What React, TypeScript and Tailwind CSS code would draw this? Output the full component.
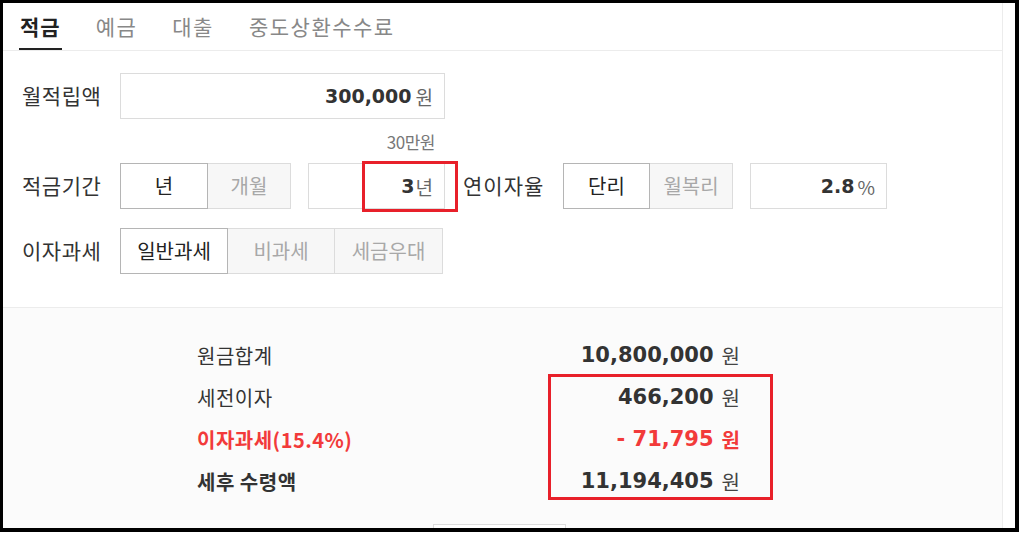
import React from "react";

const KR = { fontFamily: '"Noto Sans CJK KR", "Noto Sans", sans-serif' };
const NUM = { fontFamily: '"DejaVu Sans", "Noto Sans CJK KR", sans-serif' };

function Seg({ items, widths, active }: { items: string[]; widths: number[]; active: number }) {
  return (
    <div className="flex h-[46px]">
      {items.map((t, i) => (
        <div
          key={t}
          style={{ width: widths[i] }}
          className={
            i === active
              ? "flex items-center justify-center border border-[#b5b5b5] bg-white text-[20px] text-[#222]"
              : "flex items-center justify-center border border-l-0 border-[#dcdcdc] bg-[#f7f7f7] text-[20px] text-[#a8a8a8]"
          }
        >
          {t}
        </div>
      ))}
    </div>
  );
}

function Field({ w, value, unit, gap, children }: { w: number; value: string; unit: string; gap: string; children?: React.ReactNode }) {
  return (
    <div
      style={{ width: w }}
      className="relative flex h-[46px] items-center justify-end border border-[#dcdcdc] bg-white pr-[11px]"
    >
      <span style={NUM} className="text-[19px] font-bold text-[#333]">{value}</span>
      <span className={gap + " mt-[3px] text-[19px] text-[#666]"}>{unit}</span>
      {children}
    </div>
  );
}

function ResultRow({ label, value, red, bold }: { label: string; value: string; red?: boolean; bold?: boolean }) {
  return (
    <div className="flex h-[42px] items-center justify-between">
      <span
        className={
          red
            ? "text-[20px] font-bold tracking-[0.5px] text-[#f23a3a]"
            : bold
            ? "text-[20px] font-bold tracking-[0.5px] text-[#333]"
            : "text-[20px] tracking-[0.5px] text-[#333]"
        }
      >
        {label}
      </span>
      <span className="flex items-center">
        <span style={NUM} className={red ? "text-[21px] font-bold text-[#f23a3a]" : "text-[21px] font-bold text-[#333]"}>
          {value}
        </span>
        <span className={red ? "ml-[8px] text-[20px] font-bold text-[#f23a3a]" : "ml-[8px] text-[20px] text-[#444]"}>원</span>
      </span>
    </div>
  );
}

export default function App() {
  return (
    <div style={KR} className="h-[536px] w-[1024px] overflow-hidden bg-white">
      <div className="relative h-[532px] w-[1019px] overflow-hidden border-b-4 border-l-[3px] border-r-4 border-t-[3px] border-black bg-white">
        <div className="h-[560px] w-[1000px] border-r border-[#ececec]">
          {/* tabs */}
          <div className="flex h-[48px] items-end gap-[33px] border-b border-[#ececec] pl-[16px]">
            <div className="border-b-2 border-[#222] px-[1px] pb-[8px] text-[21px] font-bold leading-[28px] tracking-[1px] text-[#222]">적금</div>
            <div className="px-[1px] pb-[10px] text-[21px] leading-[28px] tracking-[1.5px] text-[#888]">예금</div>
            <div className="px-[1px] pb-[10px] text-[21px] leading-[28px] tracking-[1.5px] text-[#888]">대출</div>
            <div className="px-[1px] pb-[10px] text-[21px] leading-[28px] tracking-[1.5px] text-[#888]">중도상환수수료</div>
          </div>

          {/* form */}
          <div className="h-[256px] pl-[19px] pt-[22px]">
            <div className="flex items-center">
              <div className="w-[98px] text-[21px] tracking-[0.5px] text-[#333]">월적립액</div>
              <Field w={325} value="300,000" unit="원" gap="ml-[4px]" />
            </div>
            <div className="flex h-[44px] w-[423px] items-center justify-end pr-[10px] pt-[2px] text-[17px] tracking-[-0.5px] text-[#777]">
              30만원
            </div>
            <div className="flex items-center">
              <div className="w-[98px] text-[21px] tracking-[0.5px] text-[#333]">적금기간</div>
              <Seg items={["년", "개월"]} widths={[88, 83]} active={0} />
              <div className="ml-[17px]">
                <Field w={137} value="3" unit="년" gap="ml-[1px]">
                  <div className="absolute left-[53px] top-[-3px] h-[51px] w-[96px] border-[3px] border-[#e8202a]" />
                </Field>
              </div>
              <div className="ml-[18px] w-[100px] text-[21px] tracking-[1px] text-[#333]">연이자율</div>
              <Seg items={["단리", "월복리"]} widths={[87, 83]} active={0} />
              <div className="ml-[17px]">
                <Field w={137} value="2.8" unit="%" gap="ml-[3px]" />
              </div>
            </div>
            <div className="mt-[19px] flex items-center">
              <div className="w-[98px] text-[21px] tracking-[0.5px] text-[#333]">이자과세</div>
              <Seg items={["일반과세", "비과세", "세금우대"]} widths={[108, 107, 108]} active={0} />
            </div>
          </div>

          {/* results */}
          <div className="h-[260px] border-t border-[#ececec] bg-[#fbfbfb] pl-[194px] pt-[27px]">
            <div className="relative w-[543px]">
              <ResultRow label="원금합계" value="10,800,000" />
              <ResultRow label="세전이자" value="466,200" />
              <ResultRow label="이자과세(15.4%)" value="- 71,795" red />
              <ResultRow label="세후 수령액" value="11,194,405" bold />
              <div className="absolute left-[351px] top-[39px] h-[126px] w-[225px] border-[3px] border-[#e8202a]" />
            </div>
            <div className="ml-[236px] mt-[21px] h-[40px] w-[133px] border border-[#dcdcdc] bg-white" />
          </div>
        </div>
      </div>
    </div>
  );
}
